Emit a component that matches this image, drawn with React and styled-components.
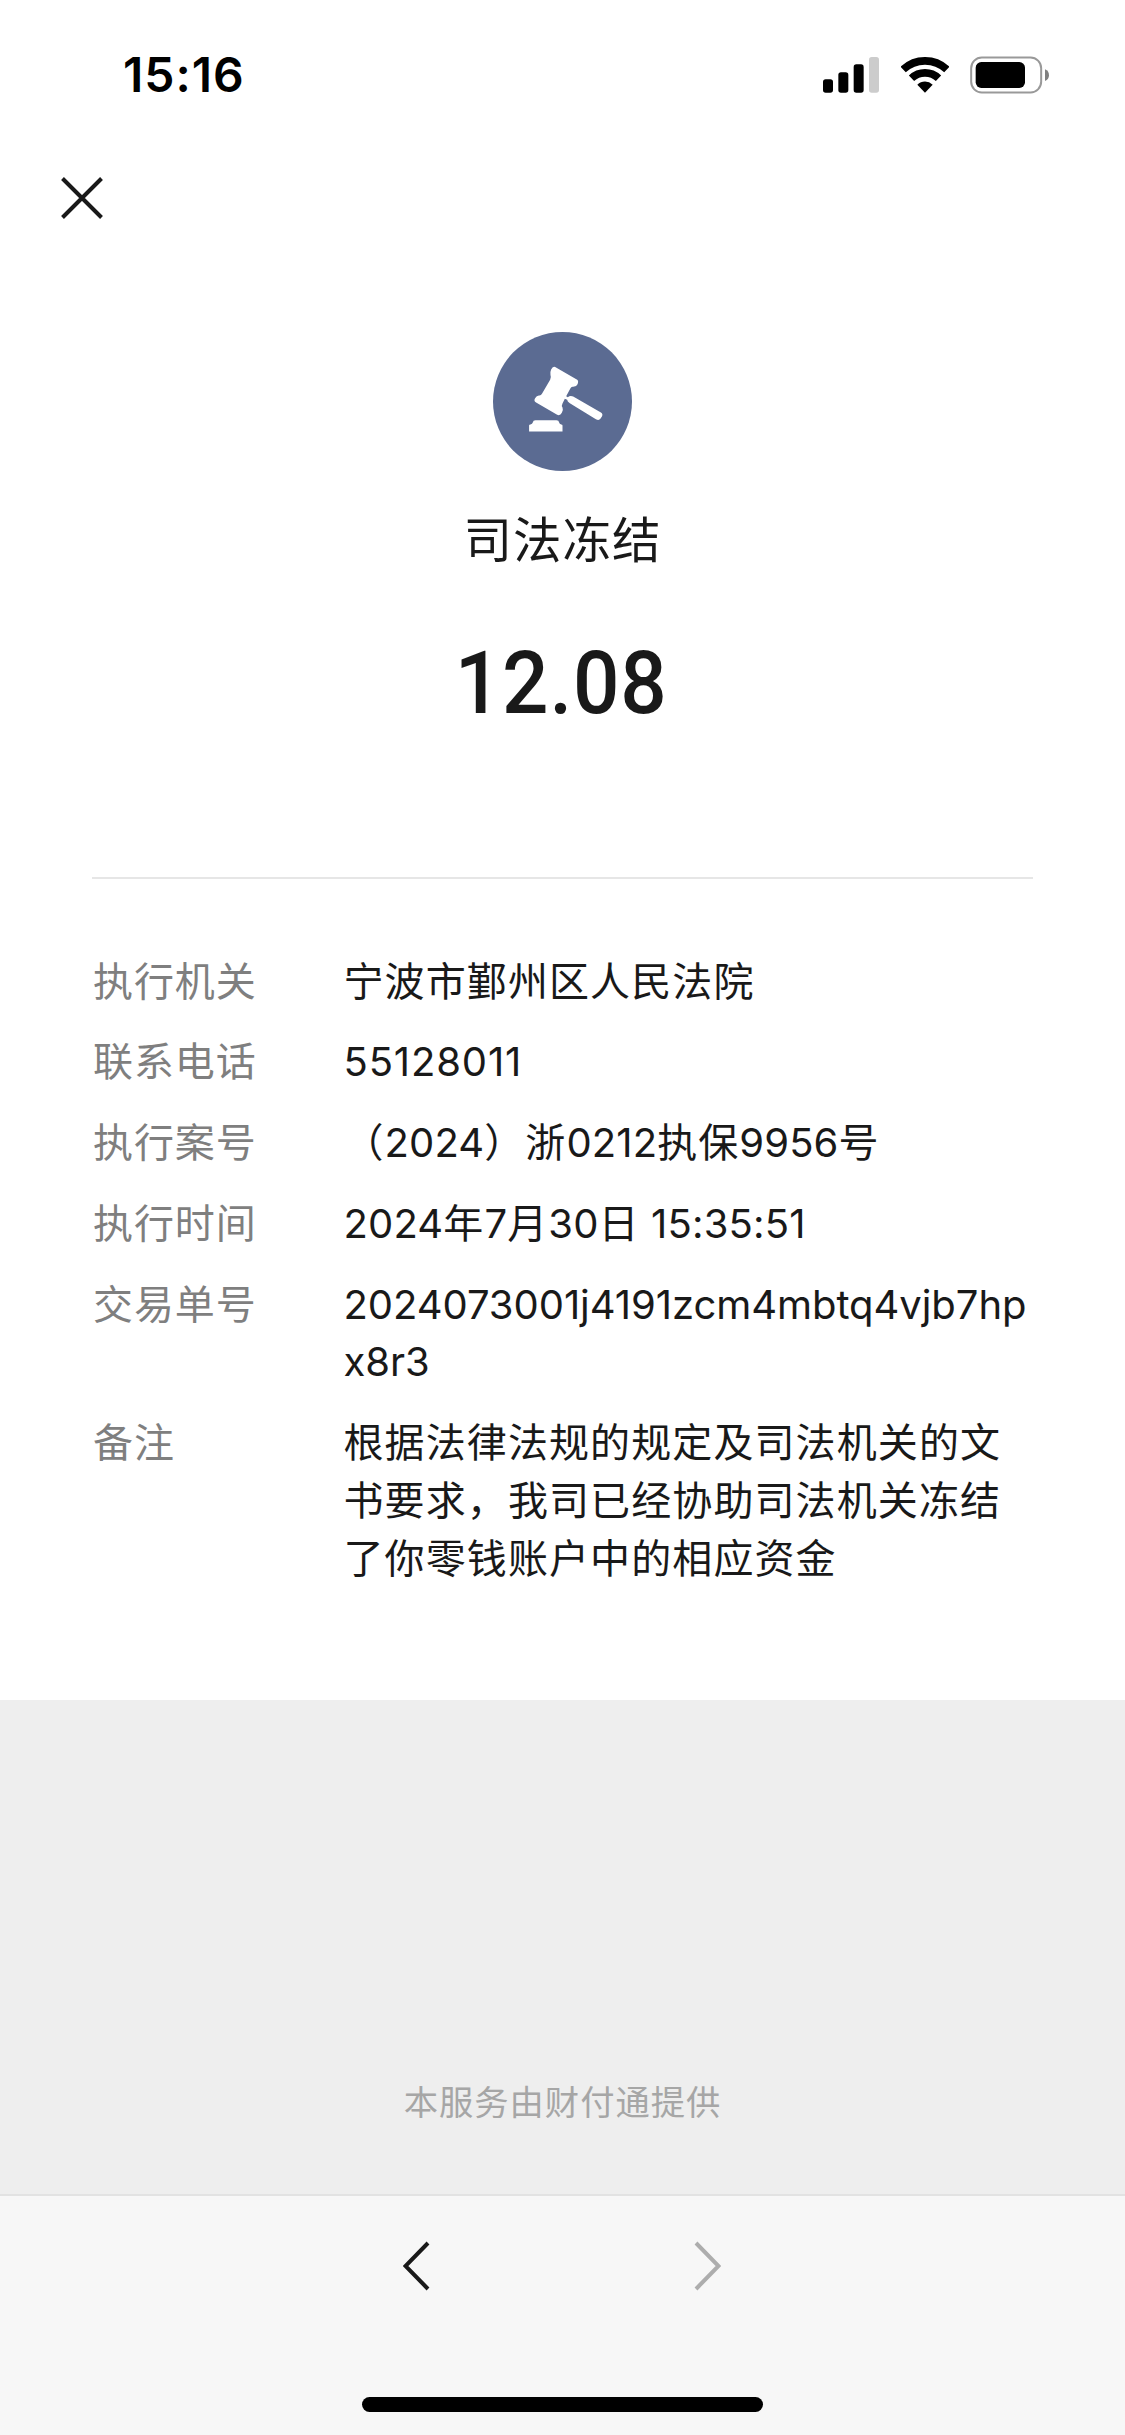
import React from "react";
import styled, { createGlobalStyle } from "styled-components";

const GlobalStyle = createGlobalStyle`
  * {
    box-sizing: border-box;
  }

  body {
    margin: 0;
    background-color: #fff;
    color: #191919;
    font-family: Inter, "Noto Sans CJK SC", sans-serif;
  }
`;

const Page = styled.div`
  display: flex;
  flex-direction: column;
  width: 1125px;
  height: 2435px;
  overflow: hidden;
  background-color: #fff;
`;

const StatusBar = styled.header`
  display: flex;
  align-items: center;
  justify-content: space-between;
  height: 150px;
  padding: 0 75px 0 123px;
`;

const Clock = styled.span`
  font-size: 48px;
  font-weight: 600;
  line-height: 60px;
  letter-spacing: 1px;
  color: #000;
`;

const StatusIcons = styled.div`
  display: flex;
  align-items: center;
  gap: 21.5px;
`;

const NavBar = styled.nav`
  display: flex;
  align-items: center;
  height: 96px;
  padding-left: 61px;
`;

const IconButton = styled.button`
  display: flex;
  padding: 0;
  border: none;
  background: none;
  color: ${({ $disabled }) => ($disabled ? "#adadad" : "#191919")};
`;

const Summary = styled.section`
  display: flex;
  flex-direction: column;
  align-items: center;
  height: 633px;
  margin: 0 92px;
  padding-top: 86px;
  border-bottom: 2px solid #e6e6e6;
`;

const Badge = styled.div`
  width: 139px;
  height: 139px;
  border-radius: 50%;
  background-color: #5b6b92;
`;

const Title = styled.h1`
  margin: 35px 0 0;
  font-size: 48.5px;
  font-weight: 400;
  line-height: 70px;
  letter-spacing: 1px;
`;

const Amount = styled.div`
  margin: 57px 3px 0 0;
  font-family: Roboto, sans-serif;
  font-size: 87px;
  font-weight: 500;
  line-height: 100px;
  letter-spacing: 0.9px;
  transform: scaleX(0.94);
`;

const Details = styled.dl`
  display: flex;
  flex-direction: column;
  gap: 23px;
  height: 821px;
  margin: 0;
  padding: 73.5px 92px 0 93px;
`;

const Row = styled.div`
  display: flex;
  font-size: 40px;
  line-height: 57.8px;
`;

const Label = styled.dt`
  flex: none;
  width: 250.5px;
  letter-spacing: 0.9px;
  color: #7f7f7f;
`;

const Value = styled.dd`
  flex: 1;
  margin: 0;
  letter-spacing: 1.1px;
  word-break: break-all;
`;

const Latin = styled.span`
  letter-spacing: ${({ $tracking }) => $tracking}px;
`;

const Footer = styled.footer`
  display: flex;
  align-items: flex-end;
  justify-content: center;
  height: 494px;
  padding-bottom: 66px;
  background-color: #eee;
  font-size: 34.3px;
  line-height: 50px;
  letter-spacing: 1px;
  color: #a6a6a6;
`;

const Toolbar = styled.div`
  display: flex;
  justify-content: center;
  gap: 264px;
  height: 203px;
  padding: 45px 1px 0 0;
  border-top: 2px solid #e2e2e2;
  background-color: #f7f7f7;
`;

const HomeBar = styled.div`
  display: flex;
  justify-content: center;
  height: 38px;
  background-color: #f7f7f7;
`;

const HomeIndicator = styled.div`
  width: 401px;
  height: 15px;
  border-radius: 8px;
  background-color: #000;
`;

const SignalIcon = () => (
  <svg width="56" height="36" viewBox="0 0 168 108">
    <rect x="0" y="67" width="30" height="40" rx="8" />
    <rect x="46" y="46" width="30" height="61" rx="8" />
    <rect x="92" y="22" width="30" height="85" rx="8" />
    <rect x="138" y="0" width="30" height="107" rx="8" fill="#ccc" />
  </svg>
);

const WifiIcon = () => (
  <svg width="48" height="36" viewBox="0 0 144 108" fill="none" stroke="#000" strokeWidth="23">
    <path d="M6.5 37.5A95.5 95.5 0 0 1 137.500 37.500" />
    <path d="M31.500 63.500A59 59 0 0 1 112.500 63.500" />
    <path d="M72 107L49 83A33 33 0 0 1 95 83Z" fill="#000" stroke="none" />
  </svg>
);

const BatteryIcon = () => (
  <svg width="80" height="38" viewBox="0 0 240 114">
    <rect x="3.500" y="4.500" width="210" height="105" rx="32" fill="none" stroke="#999" strokeWidth="6" />
    <rect x="17" y="18" width="148" height="78" rx="17" />
    <path d="M225 40C233 43 237 50 237 57.500S233 72 225 75Z" fill="#808080" />
  </svg>
);

const CloseIcon = () => (
  <svg width="42" height="42" viewBox="0 0 42 42" stroke="currentColor" strokeWidth="4">
    <path d="M1.500 1.500L40.500 40.500M40.500 1.500L1.500 40.500" />
  </svg>
);

const ChevronIcon = ({ right }) => (
  <svg width="27" height="50" viewBox="0 0 27 50" fill="none" stroke="currentColor" strokeWidth="4">
    <path d={right ? "M2 2L24.500 25L2 48" : "M25 2L2.500 25L25 48"} />
  </svg>
);

const GavelIcon = () => (
  <svg width="139" height="139" viewBox="0 0 416 416" fill="#fff">
    <path d="M186 105L252 143Q257 147 253 156Q249 165 238 164Q234 164 231 170L219 192L224 195Q230 190 240 193L323 241Q330 245 326 253L322 259Q317 266 308 261L230 213Q222 208 222 203L215 200L208 214Q204 221 208 226Q211 232 206 242Q201 252 192 248L129 211Q121 206 126 198Q131 189 139 190Q144 190 147 184L171 143Q175 136 172 129Q170 121 174 112Q179 102 186 105Z" />
    <path d="M108 298V280Q108 277 112 277Q118 276 119 271Q120 264 127 264H190Q197 264 198 271Q199 276 204 277Q208 277 208 280V298Z" />
  </svg>
);

// latin runs are set tighter than the chinese text around them
const renderValue = (text, tracking) =>
  text
    .split(/([0-9a-z: ]+)/)
    .filter(Boolean)
    .map((part, i) =>
      /^[0-9a-z: ]+$/.test(part) ? (
        <Latin key={i} $tracking={tracking}>
          {part}
        </Latin>
      ) : (
        part
      )
    );

const details = [
  { label: "执行机关", value: "宁波市鄞州区人民法院" },
  { label: "联系电话", value: "55128011", tracking: 0.85 },
  { label: "执行案号", value: "（2024）浙0212执保9956号", tracking: 0.1 },
  { label: "执行时间", value: "2024年7月30日 15:35:51", tracking: 0.15 },
  { label: "交易单号", value: "2024073001j4191zcm4mbtq4vjb7hpx8r3", tracking: -0.05 },
  {
    label: "备注",
    value: "根据法律法规的规定及司法机关的文书要求，我司已经协助司法机关冻结了你零钱账户中的相应资金",
  },
];

const App = () => {
  return (
    <Page lang="zh-CN">
      <GlobalStyle />
      <StatusBar>
        <Clock>15:16</Clock>
        <StatusIcons>
          <SignalIcon />
          <WifiIcon />
          <BatteryIcon />
        </StatusIcons>
      </StatusBar>
      <NavBar>
        <IconButton aria-label="关闭">
          <CloseIcon />
        </IconButton>
      </NavBar>
      <Summary>
        <Badge>
          <GavelIcon />
        </Badge>
        <Title>司法冻结</Title>
        <Amount>12.08</Amount>
      </Summary>
      <Details>
        {details.map((item) => (
          <Row key={item.label}>
            <Label>{item.label}</Label>
            <Value>{renderValue(item.value, item.tracking)}</Value>
          </Row>
        ))}
      </Details>
      <Footer>本服务由财付通提供</Footer>
      <Toolbar>
        <IconButton aria-label="后退">
          <ChevronIcon />
        </IconButton>
        <IconButton aria-label="前进" $disabled>
          <ChevronIcon right />
        </IconButton>
      </Toolbar>
      <HomeBar>
        <HomeIndicator />
      </HomeBar>
    </Page>
  );
};

export default App;
